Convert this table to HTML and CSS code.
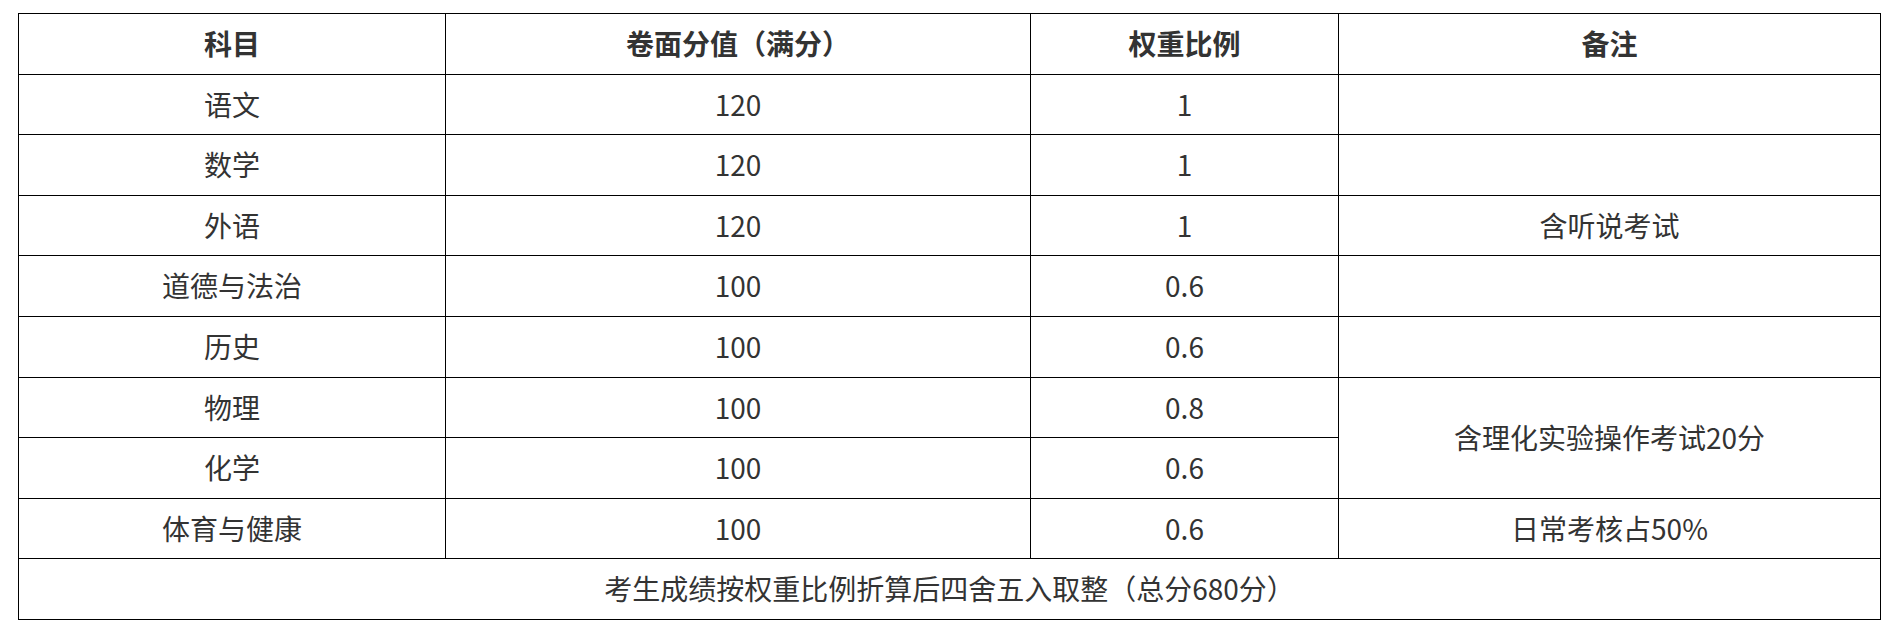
FILE: index.html
```html
<!DOCTYPE html>
<html lang="zh-CN">
<head>
<meta charset="utf-8">
<title>科目分值</title>
<link rel="stylesheet" href="styles.css">
</head>
<body>
<table class="score-table">
  <colgroup>
    <col class="c1">
    <col class="c2">
    <col class="c3">
    <col class="c4">
  </colgroup>
  <thead>
    <tr>
      <th>科目</th>
      <th>卷面分值（满分）</th>
      <th>权重比例</th>
      <th>备注</th>
    </tr>
  </thead>
  <tbody>
    <tr><td>语文</td><td>120</td><td>1</td><td></td></tr>
    <tr><td>数学</td><td>120</td><td>1</td><td></td></tr>
    <tr><td>外语</td><td>120</td><td>1</td><td>含听说考试</td></tr>
    <tr><td>道德与法治</td><td>100</td><td>0.6</td><td></td></tr>
    <tr><td>历史</td><td>100</td><td>0.6</td><td></td></tr>
    <tr><td>物理</td><td>100</td><td>0.8</td><td rowspan="2">含理化实验操作考试20分</td></tr>
    <tr><td>化学</td><td>100</td><td>0.6</td></tr>
    <tr><td>体育与健康</td><td>100</td><td>0.6</td><td>日常考核占50%</td></tr>
    <tr><td colspan="4">考生成绩按权重比例折算后四舍五入取整（总分680分）</td></tr>
  </tbody>
</table>
</body>
</html>
```

FILE: styles.css
```css
html, body {
  margin: 0;
  padding: 0;
  background: #ffffff;
}

body {
  padding: 13px 0 0 18px;
  font-family: "Noto Sans CJK SC", "Noto Sans", sans-serif;
  color: #333333;
}

.score-table {
  border-collapse: collapse;
  table-layout: fixed;
  width: 1862px;
  font-size: 28px;
}

.score-table .c1 { width: 427px; }
.score-table .c2 { width: 585px; }
.score-table .c3 { width: 308px; }
.score-table .c4 { width: 542px; }

.score-table tr {
  height: 60.6px;
}

.score-table th,
.score-table td {
  border: 1.5px solid #000000;
  padding: 0;
  text-align: center;
  vertical-align: middle;
  line-height: 1.2;
}

.score-table th {
  font-weight: 700;
}

.score-table td {
  font-weight: 400;
}
```
